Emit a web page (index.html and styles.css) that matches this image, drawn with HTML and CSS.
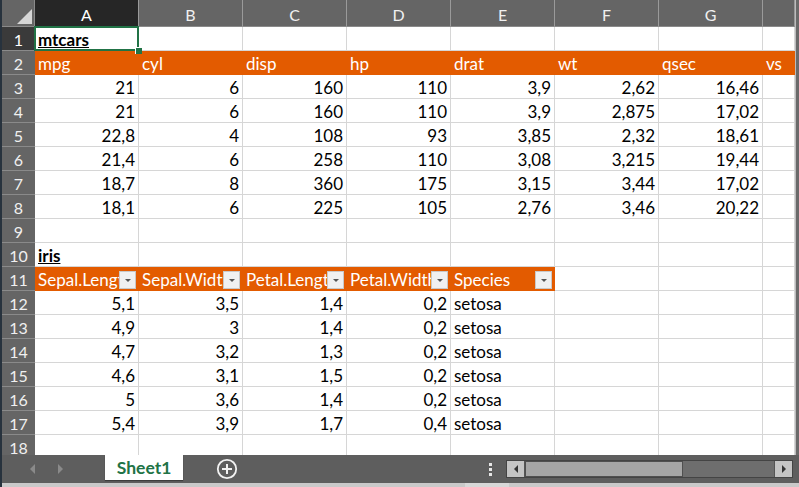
FILE: index.html
```html
<!DOCTYPE html>
<html>
<head>
<meta charset="utf-8">
<link rel="stylesheet" href="styles.css">
</head>
<body>
<div class="app">
  <div class="main">
    <div class="grid">
      <div class="corner"><svg width="33" height="27" viewBox="0 0 33 27"><polygon points="15,24 30,24 30,9" fill="#d6d6d6"/></svg></div>
      <div class="ch sel">A</div><div class="ch">B</div><div class="ch">C</div><div class="ch">D</div><div class="ch">E</div><div class="ch">F</div><div class="ch">G</div><div class="ch"></div>

      <div class="rh sel">1</div><div class="c a1"><span class="title">mtcars</span></div><div class="c"></div><div class="c"></div><div class="c"></div><div class="c"></div><div class="c"></div><div class="c"></div><div class="c"></div>

      <div class="rh">2</div><div class="c h">mpg</div><div class="c h">cyl</div><div class="c h">disp</div><div class="c h">hp</div><div class="c h">drat</div><div class="c h">wt</div><div class="c h">qsec</div><div class="c h">vs</div>

      <div class="rh">3</div><div class="c n">21</div><div class="c n">6</div><div class="c n">160</div><div class="c n">110</div><div class="c n">3,9</div><div class="c n">2,62</div><div class="c n">16,46</div><div class="c"></div>
      <div class="rh">4</div><div class="c n">21</div><div class="c n">6</div><div class="c n">160</div><div class="c n">110</div><div class="c n">3,9</div><div class="c n">2,875</div><div class="c n">17,02</div><div class="c"></div>
      <div class="rh">5</div><div class="c n">22,8</div><div class="c n">4</div><div class="c n">108</div><div class="c n">93</div><div class="c n">3,85</div><div class="c n">2,32</div><div class="c n">18,61</div><div class="c"></div>
      <div class="rh">6</div><div class="c n">21,4</div><div class="c n">6</div><div class="c n">258</div><div class="c n">110</div><div class="c n">3,08</div><div class="c n">3,215</div><div class="c n">19,44</div><div class="c"></div>
      <div class="rh">7</div><div class="c n">18,7</div><div class="c n">8</div><div class="c n">360</div><div class="c n">175</div><div class="c n">3,15</div><div class="c n">3,44</div><div class="c n">17,02</div><div class="c"></div>
      <div class="rh">8</div><div class="c n">18,1</div><div class="c n">6</div><div class="c n">225</div><div class="c n">105</div><div class="c n">2,76</div><div class="c n">3,46</div><div class="c n">20,22</div><div class="c"></div>

      <div class="rh">9</div><div class="c"></div><div class="c"></div><div class="c"></div><div class="c"></div><div class="c"></div><div class="c"></div><div class="c"></div><div class="c"></div>

      <div class="rh">10</div><div class="c"><span class="title">iris</span></div><div class="c"></div><div class="c"></div><div class="c"></div><div class="c"></div><div class="c"></div><div class="c"></div><div class="c"></div>

      <div class="rh">11</div>
      <div class="c h f">Sepal.Length<span class="fb"></span></div>
      <div class="c h f">Sepal.Width<span class="fb"></span></div>
      <div class="c h f">Petal.Length<span class="fb"></span></div>
      <div class="c h f">Petal.Width<span class="fb"></span></div>
      <div class="c h f">Species<span class="fb"></span></div>
      <div class="c"></div><div class="c"></div><div class="c"></div>

      <div class="rh">12</div><div class="c n">5,1</div><div class="c n">3,5</div><div class="c n">1,4</div><div class="c n">0,2</div><div class="c">setosa</div><div class="c"></div><div class="c"></div><div class="c"></div>
      <div class="rh">13</div><div class="c n">4,9</div><div class="c n">3</div><div class="c n">1,4</div><div class="c n">0,2</div><div class="c">setosa</div><div class="c"></div><div class="c"></div><div class="c"></div>
      <div class="rh">14</div><div class="c n">4,7</div><div class="c n">3,2</div><div class="c n">1,3</div><div class="c n">0,2</div><div class="c">setosa</div><div class="c"></div><div class="c"></div><div class="c"></div>
      <div class="rh">15</div><div class="c n">4,6</div><div class="c n">3,1</div><div class="c n">1,5</div><div class="c n">0,2</div><div class="c">setosa</div><div class="c"></div><div class="c"></div><div class="c"></div>
      <div class="rh">16</div><div class="c n">5</div><div class="c n">3,6</div><div class="c n">1,4</div><div class="c n">0,2</div><div class="c">setosa</div><div class="c"></div><div class="c"></div><div class="c"></div>
      <div class="rh">17</div><div class="c n">5,4</div><div class="c n">3,9</div><div class="c n">1,7</div><div class="c n">0,4</div><div class="c">setosa</div><div class="c"></div><div class="c"></div><div class="c"></div>
      <div class="rh">18</div><div class="c"></div><div class="c"></div><div class="c"></div><div class="c"></div><div class="c"></div><div class="c"></div><div class="c"></div><div class="c"></div>
    </div>
    <div class="redge"></div>
  </div>
  <div class="tabbar">
    <div class="nav">
      <svg width="8" height="10" viewBox="0 0 8 10"><polygon points="6,0 6,10 1,5" fill="#8a8a8a"/></svg>
      <svg width="8" height="10" viewBox="0 0 8 10"><polygon points="2,0 2,10 7,5" fill="#8a8a8a"/></svg>
    </div>
    <div class="tab">Sheet1</div>
    <div class="add"><svg width="22" height="22" viewBox="0 0 22 22"><circle cx="11" cy="11" r="9.2" fill="none" stroke="#f2f2f2" stroke-width="1.8"/><path d="M11 6v10M6 11h10" stroke="#f2f2f2" stroke-width="2"/></svg></div>
    <div class="dots"><i></i><i></i><i></i></div>
    <div class="hscroll">
      <div class="sbtn"><svg width="8" height="10" viewBox="0 0 8 10"><polygon points="6,1 6,9 2,5" fill="#333"/></svg></div>
      <div class="thumb"></div>
      <div class="track"></div>
      <div class="sbtn"><svg width="8" height="10" viewBox="0 0 8 10"><polygon points="2,1 2,9 6,5" fill="#333"/></svg></div>
    </div>
  </div>
  <div class="foot"><div class="footmark"></div></div>
</div>
</body>
</html>
```
FILE: styles.css
```css
* { box-sizing: border-box; }
html, body { margin: 0; padding: 0; background: #666; }
body { width: 799px; height: 487px; overflow: hidden; }

.app {
  width: 799px;
  height: 487px;
  border-left: 2px solid #27323d;
  display: flex;
  flex-direction: column;
  background: #646464;
  font-family: Lato, "Liberation Sans", sans-serif;
}

.main {
  display: flex;
  height: 455px;
  overflow: hidden;
  flex: none;
}

.grid {
  display: grid;
  grid-template-columns: 33px repeat(7, 104px) 32px;
  grid-template-rows: 27px;
  grid-auto-rows: 24px;
  width: 793px;
  background: #fff;
  align-content: start;
}

.redge {
  width: 4px;
  border-left: 1px solid #bcbcbc;
  background: #6a6a6a;
}

.corner {
  background: #656565;
  border-right: 1px solid #8a8a8a;
  border-bottom: 1px solid #8a8a8a;
}
.corner svg { display: block; }

.ch {
  background: #656565;
  color: #f0f0f0;
  font-size: 16px;
  border-right: 1px solid #9a9a9a;
  border-bottom: 1px solid #8a8a8a;
  display: flex;
  align-items: center;
  justify-content: center;
  padding-top: 2px;
}
.ch.sel { background: #262626; color: #fff; }

.rh {
  background: #656565;
  color: #f0f0f0;
  font-size: 16px;
  border-bottom: 1px solid #8a8a8a;
  display: flex;
  align-items: center;
  justify-content: center;
  padding-top: 1px;
}
.rh.sel { background: #3a3a3a; color: #fff; }

.c {
  border-right: 1px solid #d6d6d6;
  border-bottom: 1px solid #d6d6d6;
  font-size: 17px;
  line-height: 20px;
  color: #000;
  padding: 0 3px;
  display: flex;
  align-items: flex-end;
  white-space: nowrap;
  overflow: hidden;
}
.c.n { justify-content: flex-end; }

.c.h {
  background: #e35b00;
  border-color: #e35b00;
  color: #fff;
}
.c.f { position: relative; }

.fb {
  position: absolute;
  right: 2px;
  bottom: 1px;
  width: 17px;
  height: 18px;
  background: #f0f0f0;
  border: 1px solid #c8c8c8;
}
.fb::after {
  content: "";
  position: absolute;
  left: 5px;
  top: 7px;
  border-left: 3px solid transparent;
  border-right: 3px solid transparent;
  border-top: 3px solid #555;
}

.title {
  font-weight: bold;
  text-decoration: underline;
}

.a1 { position: relative; overflow: visible; }
.a1::after {
  content: "";
  position: absolute;
  left: -1px;
  top: -1px;
  right: -1px;
  bottom: -1px;
  border: 2px solid #217346;
  z-index: 2;
}
.a1::before {
  content: "";
  position: absolute;
  right: -4px;
  bottom: -4px;
  width: 6px;
  height: 6px;
  background: #217346;
  border-left: 1px solid #fff;
  border-top: 1px solid #fff;
  z-index: 3;
}

.tabbar {
  height: 28px;
  flex: none;
  background: #5e5e5e;
  display: flex;
  align-items: flex-start;
  position: relative;
}

.nav {
  width: 103px;
  display: flex;
  gap: 19px;
  padding-left: 27px;
  padding-top: 9px;
}
.nav svg { display: block; }

.tab {
  width: 78px;
  height: 25px;
  background: #fff;
  color: #217346;
  font-weight: bold;
  font-size: 17.5px;
  display: flex;
  align-items: center;
  justify-content: center;
  box-shadow: 0 1px 1px rgba(0,0,0,0.35);
}

.add {
  margin-left: 33px;
  padding-top: 3px;
}
.add svg { display: block; }

.dots {
  margin-left: 251px;
  padding-top: 8px;
  display: flex;
  flex-direction: column;
  gap: 2px;
}
.dots i {
  display: block;
  width: 3px;
  height: 3px;
  background: #e6e6e6;
}

.hscroll {
  margin-left: 14px;
  margin-top: 5px;
  width: 287px;
  height: 18px;
  display: flex;
  border: 1px solid #444;
  background: #6a6a6a;
}
.sbtn {
  width: 18px;
  background: #c4c4c4;
  display: flex;
  align-items: center;
  justify-content: center;
  border-right: 1px solid #555;
}
.sbtn:last-child { border-right: none; border-left: 1px solid #555; }
.thumb {
  width: 158px;
  background: #a6a6a6;
  border: 1px solid #505050;
}
.track { flex: 1; background: #6e6e6e; }

.foot {
  flex: 1;
  background: #c9c9c9;
  position: relative;
}
.footmark {
  margin-left: 463px;
  width: 44px;
  height: 100%;
  background: #d8d8d8;
}
```
